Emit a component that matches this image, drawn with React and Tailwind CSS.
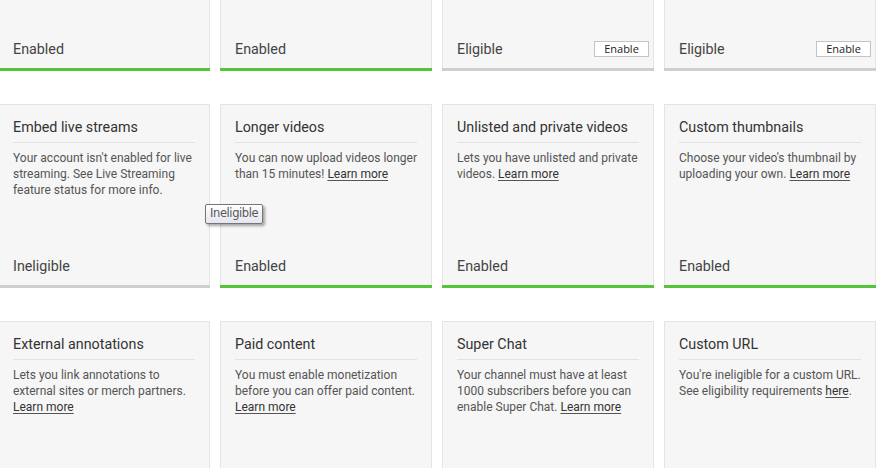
import React from 'react';

const rows = [
  [
    { status: 'Enabled', state: 'on' },
    { status: 'Enabled', state: 'on' },
    { status: 'Eligible', state: 'off', action: true },
    { status: 'Eligible', state: 'off', action: true },
  ],
  [
    {
      title: 'Embed live streams',
      body: <>Your account isn't enabled for live streaming. See Live Streaming feature status for more info.</>,
      status: 'Ineligible',
      state: 'off',
    },
    {
      title: 'Longer videos',
      body: <>You can now upload videos longer than 15 minutes! <Link>Learn more</Link></>,
      status: 'Enabled',
      state: 'on',
    },
    {
      title: 'Unlisted and private videos',
      body: <>Lets you have unlisted and private videos. <Link>Learn more</Link></>,
      status: 'Enabled',
      state: 'on',
    },
    {
      title: 'Custom thumbnails',
      body: <>Choose your video's thumbnail by uploading your own. <Link>Learn more</Link></>,
      status: 'Enabled',
      state: 'on',
    },
  ],
  [
    {
      title: 'External annotations',
      body: <>Lets you link annotations to external sites or merch partners. <Link>Learn more</Link></>,
    },
    {
      title: 'Paid content',
      body: <>You must enable monetization before you can offer paid content. <Link>Learn more</Link></>,
    },
    {
      title: 'Super Chat',
      body: <>Your channel must have at least 1000 subscribers before you can enable Super Chat. <Link>Learn more</Link></>,
    },
    {
      title: 'Custom URL',
      body: <>You're ineligible for a custom URL. See eligibility requirements <Link>here</Link>.</>,
    },
  ],
];

function Link({ children }) {
  return <a className="underline text-[#333] underline-offset-[2px] decoration-[#555]">{children}</a>;
}

function Card({ card }) {
  return (
    <div className="relative flex flex-col h-[184px] bg-[#f6f6f6] border border-[#e4e4e4] border-b-0">
      {card.title && (
        <div className="px-[14px] pt-[12px]">
          <div className="text-[14.3px] leading-[20px] text-[#333] pb-[5px] border-b border-[#e2e2e2]">
            {card.title}
          </div>
          <p className="mt-[7px] text-[12px] leading-[16px] text-[#555]">{card.body}</p>
        </div>
      )}
      {card.status && (
        <div className="mt-auto flex items-center justify-between pl-[14px] pr-[4px] pb-[9px]">
          <span className="text-[14.3px] leading-[20px] text-[#444]">{card.status}</span>
          {card.action && (
            <button className="w-[55px] h-[16px] bg-white border border-[#c4c4c4] text-[11px] leading-[14px] text-[#222] font-['Open_Sans',sans-serif]">
              Enable
            </button>
          )}
        </div>
      )}
      {card.status && (
        <div
          className={
            card.state === 'on'
              ? 'h-[3px] -mx-px bg-[#55c43a]'
              : 'h-[3px] -mx-px bg-[#cfcfcf]'
          }
        />
      )}
    </div>
  );
}

export default function App() {
  return (
    <div className="w-[876px] h-[468px] overflow-hidden bg-white font-['Roboto',sans-serif]">
      <div className="relative -mt-[113px] -ml-[2px] w-[878px] flex flex-col gap-[33px]">
        {rows.map((row, i) => (
          <div key={i} className="grid grid-cols-4 gap-[10px]">
            {row.map((card, j) => (
              <Card key={j} card={card} />
            ))}
          </div>
        ))}
        <div className="absolute left-[207px] top-[317px] px-[4px] h-[20px] flex items-center text-[11.5px] text-[#575757] font-['DejaVu_Sans',sans-serif] tracking-[-0.4px] border border-[#767676] rounded-[2px] bg-gradient-to-b from-white to-[#e4e5f0] shadow-[2px_2px_3px_rgba(0,0,0,0.35)]">
          Ineligible
        </div>
      </div>
    </div>
  );
}
